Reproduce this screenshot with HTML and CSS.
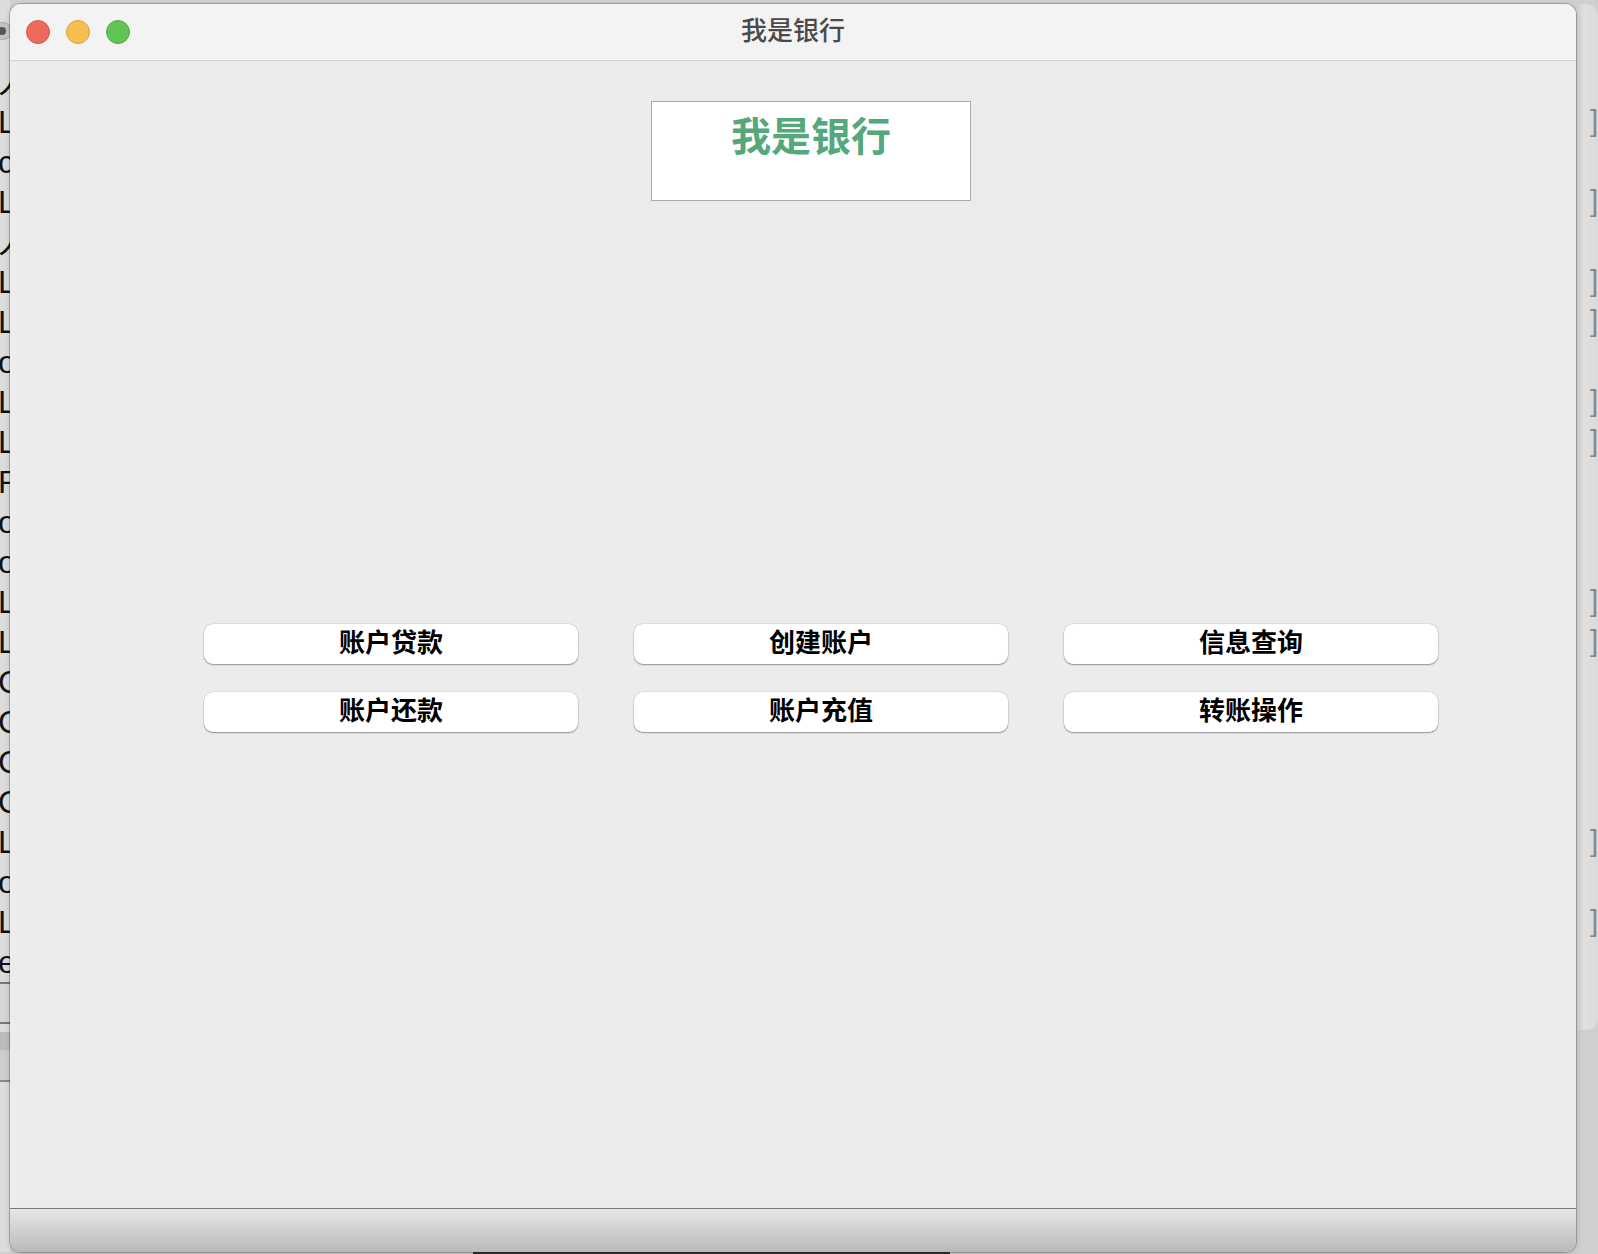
FILE: index.html
```html
<!DOCTYPE html>
<html lang="zh-CN">
<head>
  <meta charset="UTF-8" />
  <meta name="viewport" content="width=device-width, initial-scale=1.0"/>
  <title>我是银行</title>
  <link rel="stylesheet" href="styles.css">
</head>
<body>
  <div class="desk">
    <!-- window behind, left edge -->
    <div class="back back-left">
      <div class="back-dot"></div>
      <div class="back-lines">人<br>L<br>c<br>L<br>人<br>L<br>L<br>o<br>L<br>L<br>R<br>o<br>o<br>L<br>L<br>C<br>C<br>C<br>O<br>L<br>o<br>L<br>e</div>
      <div class="back-field"></div>
      <div class="back-band"></div>
    </div>

    <div class="window">
      <div class="titlebar">
        <div class="lights">
          <span class="light red"></span>
          <span class="light yellow"></span>
          <span class="light green"></span>
        </div>
        <div class="title">我是银行</div>
        <div></div>
      </div>

      <div class="content">
        <div class="banner">我是银行</div>
        <div class="actions">
          <button class="action-btn">账户贷款</button>
          <button class="action-btn">创建账户</button>
          <button class="action-btn">信息查询</button>
          <button class="action-btn">账户还款</button>
          <button class="action-btn">账户充值</button>
          <button class="action-btn">转账操作</button>
        </div>
      </div>

      <div class="statusbar"></div>
    </div>

    <!-- window behind, right edge -->
    <div class="back back-right">
      <div class="back-lines marks"><br>]<br><br>]<br><br>]<br>]<br><br>]<br>]<br><br><br><br>]<br>]<br><br><br><br><br>]<br><br>]</div>
    </div>
  </div>
  <div class="under"></div>
</body>
</html>
```

FILE: styles.css
```css
body {
  margin: 0;
  width: 1598px;
  height: 1254px;
  overflow: hidden;
  background-color: #cfcfcf;
  font-family: "Liberation Sans", "Noto Sans CJK SC", sans-serif;
}

.desk {
  display: flex;
  height: 1248px;
  padding-top: 4px;
}

/* windows behind */
.back {
  overflow: hidden;
  position: relative;
}

.back-left {
  width: 10px;
  background-color: #dcdcdc;
  margin-top: -4px;
  padding-top: 4px;
}

.back-dot {
  position: absolute;
  left: -6px;
  top: 22px;
  width: 18px;
  height: 18px;
  border-radius: 50%;
  background: #c4c4c4;
  box-shadow: inset 0 0 0 1px #aaa;
}

.back-dot::after {
  content: "";
  position: absolute;
  left: 4px;
  top: 5px;
  width: 8px;
  height: 8px;
  border-radius: 50%;
  background: #555;
}

.back-lines {
  margin-left: -2px;
  padding-top: 58px;
  font-size: 32px;
  line-height: 40px;
  color: #111;
  white-space: nowrap;
}

.back-field {
  margin-top: 0;
  margin-left: -20px;
  width: 28px;
  height: 38px;
  border: 2px solid #777;
  background: #d6d6d6;
}

.back-band {
  margin-top: 8px;
  height: 18px;
  background: #bcbcbc;
  border-bottom: 30px solid #cdcdcd;
  box-shadow: 0 2px 0 #888;
}

.back-right {
  width: 22px;
  background: linear-gradient(to right, #cfcfcf, #e0e0e0 40%, #dadada);
  border-top-right-radius: 12px;
  border-bottom-right-radius: 12px;
  height: 1026px;
}

.marks {
  margin-left: 14px;
  padding-top: 57px;
  font-size: 30px;
  color: #888;
}

/* main window */
.window {
  width: 1566px;
  height: 1248px;
  display: flex;
  flex-direction: column;
  background-color: #ececec;
  border-radius: 11px;
  box-shadow: 0 0 0 1px rgba(0, 0, 0, 0.22), 0 2px 6px rgba(0, 0, 0, 0.15);
  overflow: hidden;
  position: relative;
  z-index: 1;
}

.titlebar {
  height: 56px;
  display: grid;
  grid-template-columns: 1fr auto 1fr;
  align-items: center;
  background-color: #f3f3f3;
  border-bottom: 1px solid #d2d2d2;
}

.lights {
  display: flex;
  gap: 16px;
  padding-left: 16px;
}

.light {
  width: 24px;
  height: 24px;
  border-radius: 50%;
  box-sizing: border-box;
}

.red {
  background-color: #ee6a5f;
  border: 1px solid #d4574c;
}

.yellow {
  background-color: #f5bf4f;
  border: 1px solid #d9a440;
}

.green {
  background-color: #61c554;
  border: 1px solid #50aa43;
}

.title {
  font-family: "Noto Sans CJK SC", sans-serif;
  font-size: 26px;
  line-height: 26px;
  font-weight: 500;
  color: #4a4a4a;
  padding-bottom: 6px;
}

.content {
  flex: 1;
  display: flex;
  flex-direction: column;
  align-items: flex-start;
}

.banner {
  margin-top: 40px;
  margin-left: 641px;
  width: 320px;
  height: 100px;
  padding-top: 12px;
  box-sizing: border-box;
  background-color: #fff;
  border: 1px solid #ababab;
  text-align: center;
  font-family: "Noto Sans CJK SC", sans-serif;
  font-size: 40px;
  line-height: 40px;
  font-weight: bold;
  color: #55a87b;
}

.actions {
  margin-top: 423px;
  margin-left: 194px;
  display: grid;
  grid-template-columns: repeat(3, 374px);
  column-gap: 56px;
  row-gap: 28px;
}

.action-btn {
  height: 40px;
  padding: 0 0 6px;
  border: none;
  border-radius: 9px;
  background-color: #fff;
  box-shadow: 0 0 0 0.5px rgba(0, 0, 0, 0.12), 0 1px 1.5px rgba(0, 0, 0, 0.35);
  font-family: "Noto Sans CJK SC", sans-serif;
  font-size: 26px;
  line-height: 26px;
  font-weight: bold;
  color: #000;
  cursor: pointer;
}

.statusbar {
  height: 43px;
  border-top: 1px solid #7a7a7a;
  background: linear-gradient(to bottom, #e7e7e7, #b9b9b9);
}

.under {
  height: 2px;
  margin-left: 473px;
  width: 477px;
  background: #333;
}
```
